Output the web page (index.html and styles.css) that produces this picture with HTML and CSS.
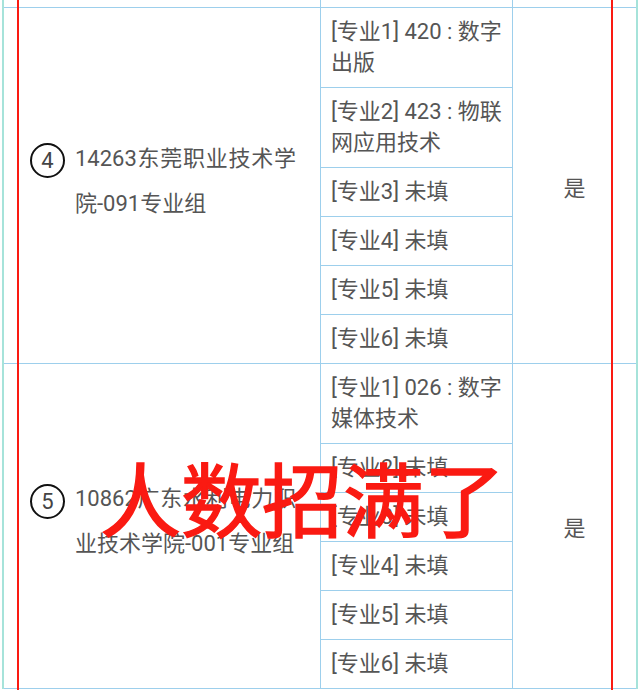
FILE: index.html
```html
<!DOCTYPE html>
<html lang="zh-CN">
<head>
    <meta charset="UTF-8">
    <meta name="viewport" content="width=device-width, initial-scale=1.0">
    <title>志愿填报 - 专业组</title>
    <link rel="stylesheet" href="styles.css">
</head>
<body>
    <div class="sheet">
        <!-- tail of the previous group, scrolled off the top -->
        <div class="group stub">
            <div class="college"></div>
            <div class="majors"></div>
            <div class="flag"></div>
        </div>

        <div class="group">
            <div class="college">
                <span class="num">4</span>
                <span class="name">14263东莞职业技术学院-091专业组</span>
            </div>
            <div class="majors">
                <div class="major">[专业1] 420 : 数字出版</div>
                <div class="major">[专业2] 423 : 物联网应用技术</div>
                <div class="major">[专业3] 未填</div>
                <div class="major">[专业4] 未填</div>
                <div class="major">[专业5] 未填</div>
                <div class="major">[专业6] 未填</div>
            </div>
            <div class="flag">是</div>
        </div>

        <div class="group">
            <div class="college">
                <span class="num">5</span>
                <span class="name">10862广东水利电力职业技术学院-001专业组</span>
            </div>
            <div class="majors">
                <div class="major">[专业1] 026 : 数字媒体技术</div>
                <div class="major">[专业2] 未填</div>
                <div class="major">[专业3] 未填</div>
                <div class="major">[专业4] 未填</div>
                <div class="major">[专业5] 未填</div>
                <div class="major">[专业6] 未填</div>
            </div>
            <div class="flag">是</div>
        </div>
    </div>

    <!-- hand-drawn annotation on top of the screenshot -->
    <div class="mark-line left"></div>
    <div class="mark-line right"></div>
    <div class="stamp">人数招满了</div>
</body>
</html>
```

FILE: styles.css
```css
:root {
    --outer-line: #a6e3da;
    --inner-line: #9dcfec;
    --text-color: #555;
    --mark-color: #fa1a12;
}

body {
    margin: 0;
    background: #fff;
    font-family: Roboto, "Noto Sans CJK SC", sans-serif;
    font-size: 22px;
    color: var(--text-color);
    height: 690px;
    overflow: hidden;
}

.sheet {
    margin-left: 2px;
    width: 632px;
    border-left: 2px solid var(--outer-line);
    border-right: 2px solid var(--outer-line);
}

.group {
    display: flex;
    border-bottom: 1px solid var(--inner-line);
}

.group.stub {
    height: 7px;
}

.college {
    width: 317px;
    border-right: 1px solid var(--inner-line);
    display: flex;
    align-items: center;
    padding: 0 0 10px 26px;
    box-sizing: border-box;
}

.num {
    flex: none;
    width: 35px;
    height: 35px;
    box-sizing: border-box;
    border: 2px solid #111;
    border-radius: 50%;
    display: flex;
    align-items: center;
    justify-content: center;
    font-size: 22px;
    color: #444;
    margin: 0 10px 40px 0;
}

.name {
    width: 221px;
    line-height: 45px;
    text-align: justify;
}

.majors {
    width: 191px;
    border-right: 1px solid var(--inner-line);
}

.major {
    padding: 8px 10px 9px 10px;
    line-height: 31px;
    border-bottom: 1px solid var(--inner-line);
}

.major:last-child {
    border-bottom: none;
}

.flag {
    flex: 1;
    display: flex;
    align-items: center;
    justify-content: center;
}

.mark-line {
    position: absolute;
    top: 0;
    width: 2px;
    height: 690px;
    background: var(--mark-color);
}

.mark-line.left {
    left: 17px;
}

.mark-line.right {
    left: 611px;
}

.stamp {
    position: absolute;
    left: 100px;
    top: 455px;
    font-family: "Noto Sans CJK SC", sans-serif;
    font-size: 81px;
    font-weight: 400;
    line-height: 81px;
    color: var(--mark-color);
    -webkit-text-stroke: 1.5px var(--mark-color);
    white-space: nowrap;
}
```
